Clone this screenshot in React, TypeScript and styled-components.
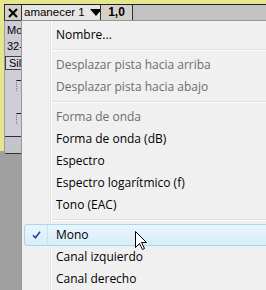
import React from "react";
import styled, { createGlobalStyle } from "styled-components";

const GlobalStyle = createGlobalStyle`
  body {
    margin: 0;
    background: #a0a0a0;
  }
`;

const Screen = styled.div`
  position: relative;
  width: 266px;
  height: 290px;
  overflow: hidden;
  background: #a0a0a0;
  font-family: "Liberation Sans", Arial, sans-serif;
`;

const TrackFrame = styled.div`
  display: flex;
  flex-direction: column;
  height: 144px;
  border-top: 4px solid #e6e68e;
  border-left: 4px solid #e6e68e;
  border-bottom: 3px solid #e6e68e;
  background: #cdcdd6;
`;

const TitleBar = styled.div`
  display: flex;
  height: 15px;
  border-top: 1px solid #202020;
  border-bottom: 1px solid #404040;
  background: #c2c2c2;
  font-size: 11.5px;
  line-height: 15px;
  color: #000;
  white-space: nowrap;
`;

const TitleCell = styled.div<{
  $width?: number;
  $bg: string;
  $bold?: boolean;
  $align?: string;
}>`
  display: flex;
  align-items: center;
  justify-content: ${(p) => p.$align || "center"};
  gap: 5px;
  width: ${(p) => (p.$width ? `${p.$width}px` : "auto")};
  flex: ${(p) => (p.$width ? "none" : "1")};
  padding-left: ${(p) => (p.$align ? "2px" : "0")};
  background: ${(p) => p.$bg};
  border-left: 1px solid #303030;
  font-weight: ${(p) => (p.$bold ? "bold" : "normal")};
  font-size: ${(p) => (p.$bold ? "12px" : "inherit")};
  box-sizing: border-box;
  overflow: hidden;
`;

const Arrow = styled.span`
  flex: none;
  width: 0;
  height: 0;
  border-left: 6px solid transparent;
  border-right: 6px solid transparent;
  border-top: 7px solid #000;
`;

const Body = styled.div`
  display: flex;
  flex: 1;
`;

const ControlPanel = styled.div`
  display: flex;
  flex-direction: column;
  width: 17px;
  overflow: hidden;
  padding-top: 1px;
  border-left: 1px solid #9a9aa4;
  font-size: 11px;
  color: #000;
`;

const InfoLine = styled.div`
  height: 16px;
  line-height: 16px;
  padding-left: 2px;
  white-space: nowrap;
`;

const PanelButton = styled.div`
  width: 44px;
  height: 12px;
  margin-top: 2px;
  line-height: 12px;
  padding-left: 3px;
  border: 1px solid #404040;
  background: #d6d6dc;
  white-space: nowrap;
`;

const SliderRow = styled.div`
  position: relative;
  height: 33px;
`;

const SliderThumb = styled.div<{ $top: number }>`
  position: absolute;
  left: 11px;
  top: ${(p) => p.$top}px;
  width: 4px;
  height: 10px;
  border-top: 1px solid #202020;
  border-left: 1px dotted #7a7a7a;
`;

const Spacer = styled.div`
  flex: 1;
`;

const CollapseBar = styled.div`
  height: 16px;
  border-top: 1px solid #303030;
  border-bottom: 1px solid #303030;
  background: #c4c4cc;
`;

const Menu = styled.div`
  position: absolute;
  left: 21px;
  top: 20px;
  width: 262px;
  height: 280px;
  padding-top: 3px;
  border: 1px solid #979797;
  box-sizing: border-box;
  background: linear-gradient(
      to right,
      transparent 28px,
      #e2e3e3 28px,
      #e2e3e3 29px,
      #ffffff 29px,
      #ffffff 30px,
      transparent 30px
    ),
    #f0f0f0;
  font-family: "Open Sans", "Noto Sans", sans-serif;
  font-size: 12px;
`;

const Item = styled.div<{ $disabled?: boolean; $active?: boolean }>`
  position: relative;
  display: flex;
  align-items: center;
  height: 22px;
  margin: 0 2px;
  padding: 0 0 2px 31px;
  box-sizing: border-box;
  border: 1px solid ${(p) => (p.$active ? "#a8d8f0" : "transparent")};
  border-radius: 3px;
  background: ${(p) =>
    p.$active ? "linear-gradient(#e8f5fc, #d8eef9)" : "transparent"};
  color: ${(p) => (p.$disabled ? "#6d6d6d" : "#000")};
  white-space: nowrap;
`;

const CheckCell = styled.div`
  position: absolute;
  left: 0;
  top: 0;
  bottom: 0;
  width: 22px;
  display: flex;
  align-items: center;
  justify-content: center;
  border-right: 1px solid #c6e2f2;
`;

const Separator = styled.div`
  height: 8px;
  margin-left: 30px;
  background: linear-gradient(
    transparent 3px,
    #e0e0e0 3px,
    #e0e0e0 4px,
    #ffffff 4px,
    #ffffff 5px,
    transparent 5px
  );
`;

const Cursor = styled.svg`
  position: absolute;
  left: 135px;
  top: 231px;
`;

type Entry =
  | { kind: "sep" }
  | { kind: "item"; label: string; disabled?: boolean; checked?: boolean; active?: boolean };

const entries: Entry[] = [
  { kind: "item", label: "Nombre..." },
  { kind: "sep" },
  { kind: "item", label: "Desplazar pista hacia arriba", disabled: true },
  { kind: "item", label: "Desplazar pista hacia abajo", disabled: true },
  { kind: "sep" },
  { kind: "item", label: "Forma de onda", disabled: true },
  { kind: "item", label: "Forma de onda (dB)" },
  { kind: "item", label: "Espectro" },
  { kind: "item", label: "Espectro logarítmico (f)" },
  { kind: "item", label: "Tono (EAC)" },
  { kind: "sep" },
  { kind: "item", label: "Mono", checked: true, active: true },
  { kind: "item", label: "Canal izquierdo" },
  { kind: "item", label: "Canal derecho" },
];

const App = () => {
  return (
    <Screen>
      <GlobalStyle />
      <TrackFrame>
        <TitleBar>
          <TitleCell $width={17} $bg="#d4d0c8">
            <svg width="10" height="10" viewBox="0 0 10 10">
              <path d="M1 1 L9 9 M9 1 L1 9" stroke="#000" strokeWidth="2" />
            </svg>
          </TitleCell>
          <TitleCell $width={79} $bg="#e6e6e6" $align="flex-start">
            amanecer 1 <Arrow />
          </TitleCell>
          <TitleCell $width={32} $bg="#d4d0c8" $bold>
            1,0
          </TitleCell>
          <TitleCell $bg="#c2c2c2" />
        </TitleBar>
        <Body>
          <ControlPanel>
            <InfoLine>Mo</InfoLine>
            <InfoLine>32-</InfoLine>
            <PanelButton>Sil</PanelButton>
            <SliderRow>
              <SliderThumb $top={10} />
            </SliderRow>
            <SliderRow>
              <SliderThumb $top={10} />
            </SliderRow>
            <Spacer />
            <CollapseBar />
          </ControlPanel>
        </Body>
      </TrackFrame>

      <Menu>
        {entries.map((e, i) =>
          e.kind === "sep" ? (
            <Separator key={i} />
          ) : (
            <Item key={i} $disabled={e.disabled} $active={e.active}>
              {e.checked && (
                <CheckCell>
                  <svg width="9" height="8" viewBox="0 0 9 8">
                    <path
                      d="M1 4.2 L3.4 6.8 L8 0.8"
                      fill="none"
                      stroke="#24429a"
                      strokeWidth="1.6"
                    />
                  </svg>
                </CheckCell>
              )}
              {e.label}
            </Item>
          )
        )}
      </Menu>

      <Cursor width="13" height="20" viewBox="0 0 13 20">
        <path
          d="M0.5 0.5 L0.5 16.5 L4.5 12.5 L7.5 18.5 L9.5 17.5 L6.5 11.5 L11.5 11.5 Z"
          fill="#fff"
          stroke="#000"
          strokeWidth="1"
          strokeLinejoin="miter"
        />
      </Cursor>
    </Screen>
  );
};

export default App;
